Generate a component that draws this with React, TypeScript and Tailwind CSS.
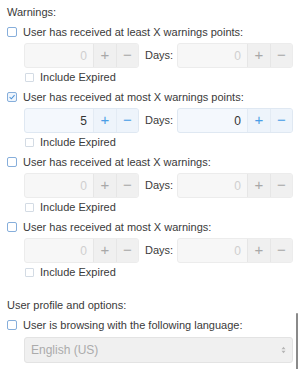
const blocks = [
  { label: "User has received at least X warnings points:", checked: false, value: "0", days: "0" },
  { label: "User has received at most X warnings points:", checked: true, value: "5", days: "0" },
  { label: "User has received at least X warnings:", checked: false, value: "0", days: "0" },
  { label: "User has received at most X warnings:", checked: false, value: "0", days: "0" },
];

function Check({ checked }: { checked: boolean }) {
  return (
    <span
      className={`flex h-[10px] w-[10px] shrink-0 items-center justify-center rounded-[2px] border ${
        checked ? "border-[#86aedb] bg-[#eef5fd]" : "border-[#86aedb] bg-white"
      }`}
    >
      {checked && (
        <svg viewBox="0 0 10 10" className="h-[8px] w-[8px]">
          <path d="M2 5.2 L4.2 7.3 L8.2 2.6" fill="none" stroke="#4f93d8" strokeWidth="1.3" />
        </svg>
      )}
    </span>
  );
}

function NumberBox({ value, active, className }: { value: string; active: boolean; className: string }) {
  return (
    <div
      className={`flex h-[25px] overflow-hidden rounded-[3px] border ${className} ${
        active ? "border-[#dfe8f2] bg-[#f4f8fd]" : "border-[#ececec] bg-[#f7f7f7]"
      }`}
    >
      <div
        className={`flex flex-1 items-center justify-end pr-[6px] text-[12px] ${
          active ? "text-[#333]" : "text-[#cfcfcf]"
        }`}
      >
        {value}
      </div>
      <div
        className={`flex w-[23px] items-center justify-center border-l text-[15px] ${
          active ? "border-[#e3ebf4] bg-[#eef4fb] text-[#4a9de6]" : "border-[#e6e6e6] bg-[#f0f0f0] text-[#a8a8a8]"
        }`}
      >
        +
      </div>
      <div
        className={`flex w-[22px] items-center justify-center border-l text-[15px] ${
          active ? "border-[#e3ebf4] bg-[#eef4fb] text-[#4a9de6]" : "border-[#e6e6e6] bg-[#f0f0f0] text-[#a8a8a8]"
        }`}
      >
        −
      </div>
    </div>
  );
}

export default function App() {
  return (
    <div
      className="relative h-[369px] w-[300px] overflow-hidden bg-white px-[7px] pt-[5px] text-[11px] text-[#3a3a3a]"
      style={{ fontFamily: '"Liberation Sans", Arial, sans-serif' }}
    >
      <div className="flex h-[14px] items-center">Warnings:</div>

      {blocks.map((b, i) => (
        <div key={i} className="mt-[6px]">
          <div className="flex h-[14px] items-center gap-[6px]">
            <Check checked={b.checked} />
            <span>{b.label}</span>
          </div>
          <div className="mt-[4px] ml-[17px] flex items-center">
            <NumberBox value={b.value} active={b.checked} className="w-[115px]" />
            <span className="ml-[6px] mr-[4px]">Days:</span>
            <NumberBox value={b.days} active={b.checked} className="flex-1" />
          </div>
          <div className="mt-[2px] ml-[18px] flex h-[14px] items-center gap-[6px]">
            <span className="h-[9px] w-[9px] rounded-[1px] border border-[#d3dbe4] bg-white" />
            <span>Include Expired</span>
          </div>
        </div>
      ))}

      <div className="mt-[19px] flex h-[14px] items-center">User profile and options:</div>
      <div className="mt-[6px] flex h-[14px] items-center gap-[6px]">
        <Check checked={false} />
        <span>User is browsing with the following language:</span>
      </div>
      <div className="mt-[5px] ml-[17px] flex h-[26px] items-center justify-between rounded-[3px] border border-[#e3e3e3] bg-[#f0f0f0] pl-[6px] pr-[6px]">
        <span className="text-[12px] text-[#ababab]">English (US)</span>
        <svg viewBox="0 0 6 10" className="h-[8px] w-[5px]">
          <path d="M0.5 4 L3 1 L5.5 4 Z M0.5 6 L3 9 L5.5 6 Z" fill="#b5b5b5" />
        </svg>
      </div>

      <div className="absolute right-[2px] top-[313px] h-[60px] w-[2px] rounded-full bg-[#8a8a8a]" />
    </div>
  );
}
